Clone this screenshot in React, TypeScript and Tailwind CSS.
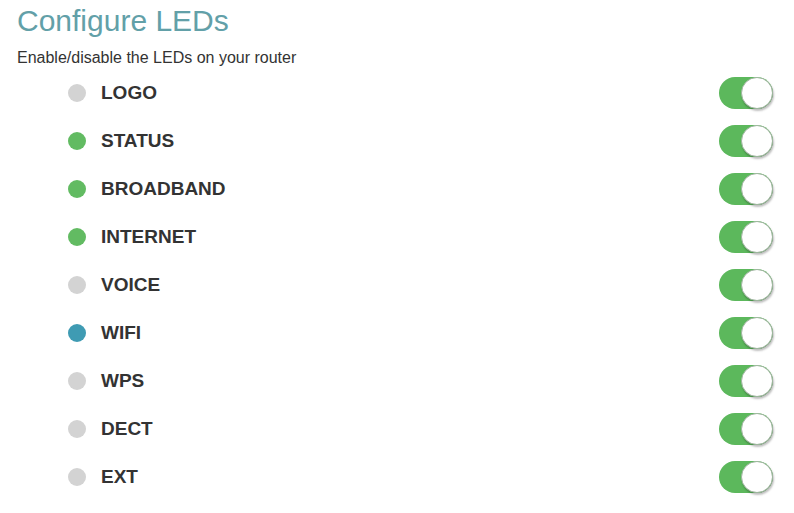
const leds = [
  { name: 'LOGO', color: 'bg-[#d3d3d3]' },
  { name: 'STATUS', color: 'bg-[#62bb62]' },
  { name: 'BROADBAND', color: 'bg-[#62bb62]' },
  { name: 'INTERNET', color: 'bg-[#62bb62]' },
  { name: 'VOICE', color: 'bg-[#d3d3d3]' },
  { name: 'WIFI', color: 'bg-[#3f9bb3]' },
  { name: 'WPS', color: 'bg-[#d3d3d3]' },
  { name: 'DECT', color: 'bg-[#d3d3d3]' },
  { name: 'EXT', color: 'bg-[#d3d3d3]' },
]

function Toggle() {
  return (
    <div className="relative w-[54px] h-[32px] rounded-full bg-[#5cb85c]">
      <div className="absolute right-0 top-0 w-[32px] h-[32px] rounded-full bg-white border border-[#9fb59f] shadow-[1px_2px_2px_rgba(0,0,0,0.25)]" />
    </div>
  )
}

export default function App() {
  return (
    <div className="w-[794px] h-[513px] bg-white font-['Liberation_Sans',Arial,sans-serif] px-[17px] pt-[4px]">
      <h1 className="text-[30px] leading-[34px] text-[#62a0a8]">Configure LEDs</h1>
      <p className="mt-[11px] text-[16px] leading-[18px] text-[#333]">Enable/disable the LEDs on your router</p>
      <div className="mt-[2px] pl-[51px] pr-[4px]">
        {leds.map((led) => (
          <div key={led.name} className="h-[48px] flex items-center">
            <span className={`w-[18px] h-[18px] rounded-full ${led.color}`} />
            <span className="ml-[15px] text-[19px] font-bold text-[#333] flex-1">{led.name}</span>
            <Toggle />
          </div>
        ))}
      </div>
    </div>
  )
}
